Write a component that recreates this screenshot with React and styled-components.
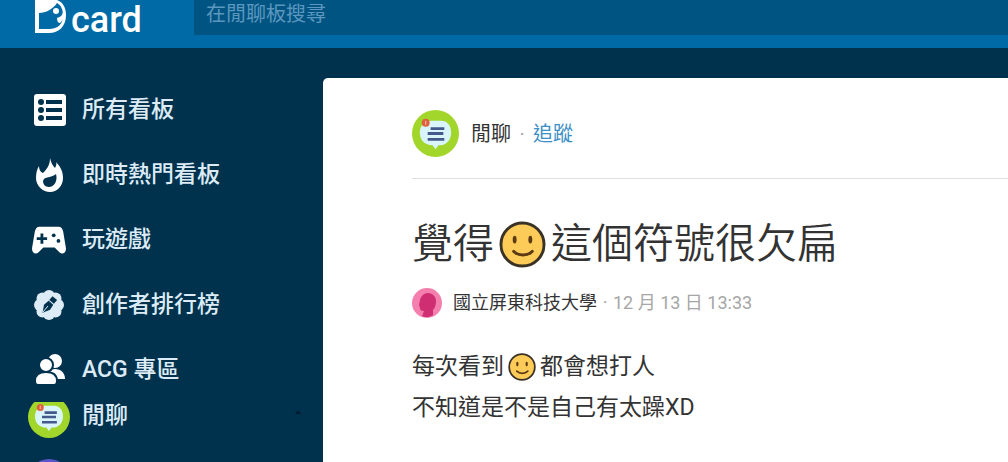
import React from 'react';
import styled, { createGlobalStyle } from 'styled-components';

const fontStack = "Roboto, 'Noto Sans CJK TC', sans-serif";

const palette = {
  blue: '#006aa6',
  blueDark: '#005482',
  navy: '#00324e',
  navyDark: '#001c30',
  white: '#ffffff',
  ice: '#dcebf5',
  placeholder: '#5b97bf',
  link: '#3a8fc6',
  text: '#333333',
  gray: '#a6a6a6',
  line: '#dedede',
  lime: '#a2d62a',
  purple: '#5a55c8',
};

const GlobalStyle = createGlobalStyle`
  * {
    box-sizing: border-box;
  }

  body {
    margin: 0;
    overflow: hidden;
    background: ${palette.navy};
    font-family: ${fontStack};
  }
`;

const Page = styled.div`
  display: flex;
  flex-direction: column;
  height: 100vh;
`;

const Header = styled.header`
  display: flex;
  flex: none;
  background: ${palette.blue};
  padding-bottom: 13px;
`;

const Logo = styled.a`
  display: flex;
  flex: none;
  width: 194px;
  height: 35px;
  padding-left: 34px;
  gap: 4px;
  color: ${palette.white};
  font-size: 36px;
  font-weight: 500;
  line-height: 40px;
  text-decoration: none;
`;

const Search = styled.input`
  flex: 1;
  min-width: 0;
  height: 35px;
  padding: 0 12px 8px;
  border: 0;
  border-radius: 0;
  background: ${palette.blueDark};
  color: ${palette.white};
  font-family: ${fontStack};
  font-size: 20px;

  &::placeholder {
    color: ${palette.placeholder};
    opacity: 1;
  }
`;

const Main = styled.div`
  display: flex;
  flex: 1;
  min-height: 0;
`;

const Sidebar = styled.nav`
  flex: none;
  width: 323px;
  padding-top: 29px;
  overflow: hidden;
`;

const NavItem = styled.a`
  display: flex;
  align-items: center;
  gap: 16px;
  height: 65px;
  padding-left: 32px;
  color: ${palette.ice};
  font-size: 23px;
  font-weight: 500;
  line-height: 32px;
  text-decoration: none;

  svg {
    flex: none;
  }
`;

const BoardList = styled.div`
  overflow: hidden;
`;

const BoardItem = styled(NavItem)`
  align-items: flex-start;
  gap: 12px;
  height: 63px;
  padding-left: 28px;
  line-height: 28px;

  svg {
    margin-top: -6px;
  }
`;

const Caret = styled.span`
  margin: 8px 22px 0 auto;
  border: 3px solid transparent;
  border-top: 0;
  border-bottom: 4px solid ${palette.navyDark};
`;

const Card = styled.main`
  flex: 1;
  min-width: 0;
  margin-top: 30px;
  padding: 32px 0 0 89px;
  border-top-left-radius: 5px;
  background: ${palette.white};
  color: ${palette.text};
  overflow: hidden;
`;

const BoardBar = styled.div`
  display: flex;
  align-items: center;
  padding-bottom: 21px;
  border-bottom: 1px solid ${palette.line};
  font-size: 20px;
  line-height: 28px;
`;

const BoardName = styled.span`
  margin-left: 12px;
`;

const Dot = styled.span`
  width: 22px;
  color: ${palette.gray};
  text-align: center;
`;

const Follow = styled.a`
  color: ${palette.link};
  text-decoration: none;
`;

const Title = styled.h1`
  display: flex;
  align-items: center;
  gap: 5px;
  margin: 37px 0 0;
  font-size: 41px;
  font-weight: 350;
  line-height: 56px;
`;

const Meta = styled.div`
  display: flex;
  align-items: center;
  margin-top: 16px;
  font-size: 18px;
  line-height: 28px;

  ${Dot} {
    width: 16px;
  }
`;

const School = styled.span`
  margin-left: 11px;
`;

const PostTime = styled.time`
  color: ${palette.gray};
`;

const Body = styled.div`
  margin-top: 28px;
  font-size: 23px;
  line-height: 41px;
`;

const Line = styled.p`
  display: flex;
  align-items: center;
  gap: 4px;
  margin: 0;
`;

function LogoMark() {
  return (
    <svg width="33" height="35" viewBox="34 0 33 35" aria-hidden="true">
      <path d="M35 0h22c6 2 9 8 9 15 0 11-7 18-17 18H35z" fill={palette.white} />
      <path
        d="M39 13c7 0 14-4 18-10 4 2 6 7 6 12 0 9-5 14-14 14H39z"
        fill={palette.blue}
      />
      <circle cx="56" cy="11" r="3" fill={palette.white} />
      <path d="M63 12c-1 4-3 5-6 6 0 3 1 5 3 5l4-5z" fill={palette.white} />
    </svg>
  );
}

function ListIcon() {
  return (
    <svg width="34" height="34" viewBox="0 0 34 34" aria-hidden="true">
      <rect x="2" y="1" width="32" height="32" rx="3" fill={palette.white} />
      <g fill={palette.navy}>
        <circle cx="9" cy="9" r="3" />
        <circle cx="9" cy="17" r="3" />
        <circle cx="9" cy="25" r="3" />
        <path d="M14 7h16v4H14zM14 15h16v4H14zM14 23h16v4H14z" />
      </g>
    </svg>
  );
}

function FireIcon() {
  return (
    <svg width="34" height="34" viewBox="0 0 34 34" aria-hidden="true">
      <path
        d="M18 0c1 4 2 7 5 10 1-2 2-4 1-6 5 5 7 10 7 16 0 8-6 14-13 14S4 28 4 20c0-5 1-9 3-12 0 3 1 6 4 7 4-4 7-8 7-15z"
        fill={palette.white}
      />
      <path d="M24 16c2 7-2 13-7 13-4 0-6-3-6-6 1-5 9-3 13-7z" fill={palette.navy} />
    </svg>
  );
}

function GameIcon() {
  return (
    <svg width="34" height="34" viewBox="0 1 36 30" aria-hidden="true">
      <path
        d="M8 2h20c3 0 4 2 5 5l3 18c0 5-4 7-7 4l-5-5H12l-5 5c-3 3-7 1-7-4L3 7c1-3 2-5 5-5z"
        fill={palette.white}
      />
      <path d="M9 9h3v4h4v3h-4v4H9v-4H5v-3h4z" fill={palette.navy} />
      <circle cx="23" cy="11" r="2" fill={palette.navy} />
      <circle cx="28" cy="17" r="2" fill={palette.navy} />
    </svg>
  );
}

function BadgeIcon() {
  return (
    <svg width="34" height="34" viewBox="0 0 34 34" aria-hidden="true">
      <g fill={palette.ice}>
        <circle cx="17" cy="17" r="13" />
        <circle cx="17" cy="8" r="6" />
        <circle cx="23.5" cy="10.5" r="6" />
        <circle cx="26" cy="17" r="6" />
        <circle cx="23.5" cy="23.5" r="6" />
        <circle cx="17" cy="26" r="6" />
        <circle cx="10.5" cy="23.5" r="6" />
        <circle cx="8" cy="17" r="6" />
        <circle cx="10.5" cy="10.5" r="6" />
      </g>
      <g transform="rotate(40 17 17)" fill={palette.navy}>
        <path d="M17 27l-4-7 1-6h6l1 6z" />
        <path d="M14 8h6v5h-6z" />
      </g>
      <path d="M11 24l5-6" stroke={palette.ice} />
    </svg>
  );
}

function PeopleIcon() {
  return (
    <svg width="34" height="34" viewBox="0 0 34 34" aria-hidden="true">
      <circle cx="23" cy="8" r="7" fill={palette.white} />
      <path d="M15 26c0-7 3-10 8-10 6 0 10 4 10 10z" fill={palette.white} />
      <circle cx="14" cy="12" r="7" fill={palette.white} stroke={palette.navy} strokeWidth="2" />
      <path
        d="M3 28c0-6 4-9 11-9s11 3 11 9c0 3-1 4-3 4H6c-2 0-3-1-3-4z"
        fill={palette.white}
        stroke={palette.navy}
        strokeWidth="2"
      />
    </svg>
  );
}

function ChatAvatar({ size }) {
  return (
    <svg width={size} height={size} viewBox="0 0 48 48" aria-hidden="true">
      <circle cx="24" cy="24" r="24" fill={palette.lime} />
      <path
        d="M20 11h10c6 0 10 5 10 12s-4 12-10 13h-3l-3 4-3-4c-8 0-13-5-13-13 0-7 5-12 12-12z"
        fill="#d9f5fa"
      />
      <path d="M19 19h14M16 24h16M16 30h17" stroke="#46598c" strokeWidth="3" />
      <circle cx="14" cy="13" r="4" fill="#e0603c" />
      <path d="M14 11v4" stroke="#f7c9b8" />
    </svg>
  );
}

function PurpleAvatar() {
  return (
    <svg width="42" height="42" viewBox="0 0 42 42" aria-hidden="true">
      <circle cx="21" cy="21" r="21" fill={palette.purple} />
    </svg>
  );
}

function UserAvatar() {
  return (
    <svg width="30" height="30" viewBox="0 0 30 30" aria-hidden="true">
      <circle cx="15" cy="15" r="15" fill="#f47fae" />
      <path
        d="M16 5c5 0 8 4 8 8 0 4-1 7-3 9v5c-2 2-8 3-11 1l2-5c-3 0-4-1-4-3l-1-3 1-5c1-4 4-7 8-7z"
        fill="#cf2f72"
      />
    </svg>
  );
}

function Smile({ size }) {
  return (
    <svg width={size} height={size} viewBox="0 0 48 48" role="img" aria-label="微笑">
      <circle cx="24" cy="24" r="22" fill="#fdcb58" stroke="#3b3226" strokeWidth="3" />
      <ellipse cx="16" cy="19" rx="2" ry="4" fill="#5b3a14" />
      <ellipse cx="32" cy="19" rx="2" ry="4" fill="#5b3a14" />
      <path
        d="M15 31c5 5 14 5 19 0"
        fill="none"
        stroke="#5b3a14"
        strokeWidth="3"
        strokeLinecap="round"
      />
    </svg>
  );
}

function App() {
  return (
    <Page>
      <GlobalStyle />
      <Header>
        <Logo href="#" aria-label="Dcard">
          <LogoMark />
          card
        </Logo>
        <Search type="search" placeholder="在閒聊板搜尋" aria-label="在閒聊板搜尋" />
      </Header>
      <Main>
        <Sidebar>
          <NavItem href="#"><ListIcon />所有看板</NavItem>
          <NavItem href="#"><FireIcon />即時熱門看板</NavItem>
          <NavItem href="#"><GameIcon />玩遊戲</NavItem>
          <NavItem href="#"><BadgeIcon />創作者排行榜</NavItem>
          <NavItem href="#"><PeopleIcon />ACG 專區</NavItem>
          <BoardList>
            <BoardItem href="#">
              <ChatAvatar size={42} />
              閒聊
              <Caret />
            </BoardItem>
            <BoardItem href="#" aria-label="看板"><PurpleAvatar /></BoardItem>
          </BoardList>
        </Sidebar>
        <Card>
          <BoardBar>
            <ChatAvatar size={47} />
            <BoardName>閒聊</BoardName>
            <Dot>·</Dot>
            <Follow href="#">追蹤</Follow>
          </BoardBar>
          <Title>
            <span>覺得</span>
            <Smile size={47} />
            <span>這個符號很欠扁</span>
          </Title>
          <Meta>
            <UserAvatar />
            <School>國立屏東科技大學</School>
            <Dot>·</Dot>
            <PostTime>12 月 13 日 13:33</PostTime>
          </Meta>
          <Body>
            <Line>
              每次看到
              <Smile size={28} />
              都會想打人
            </Line>
            <Line>不知道是不是自己有太躁XD</Line>
          </Body>
        </Card>
      </Main>
    </Page>
  );
}

export default App;
